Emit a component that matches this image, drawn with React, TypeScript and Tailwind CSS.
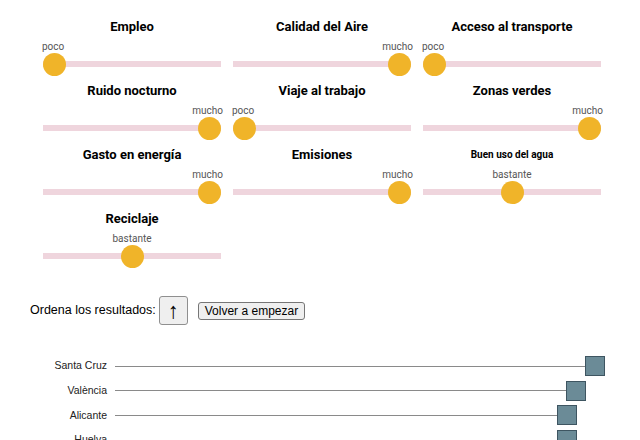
import React from "react";

type Level = "poco" | "bastante" | "mucho";

type Criterio = {
  titulo: string;
  nivel: Level;
  small?: boolean;
};

const criterios: Criterio[] = [
  { titulo: "Empleo", nivel: "poco" },
  { titulo: "Calidad del Aire", nivel: "mucho" },
  { titulo: "Acceso al transporte", nivel: "poco" },
  { titulo: "Ruido nocturno", nivel: "mucho" },
  { titulo: "Viaje al trabajo", nivel: "poco" },
  { titulo: "Zonas verdes", nivel: "mucho" },
  { titulo: "Gasto en energía", nivel: "mucho" },
  { titulo: "Emisiones", nivel: "mucho" },
  { titulo: "Buen uso del agua", nivel: "bastante", small: true },
  { titulo: "Reciclaje", nivel: "bastante" },
];

const ciudades = [
  { nombre: "Santa Cruz", x: 585 },
  { nombre: "València", x: 566 },
  { nombre: "Alicante", x: 557 },
  { nombre: "Huelva", x: 557 },
];

const Slider = ({ titulo, nivel, small }: Criterio) => {
  const labelPos =
    nivel === "poco" ? "justify-start" : nivel === "mucho" ? "justify-end" : "justify-center";
  return (
    <div className="flex flex-col">
      <div
        className={`h-[19px] flex items-center justify-center font-bold text-black ${
          small ? "text-[10px]" : "text-[13px]"
        }`}
      >
        {titulo}
      </div>
      <div className={`mt-[5px] h-[11px] flex items-center text-[10px] text-[#555] ${labelPos}`}>
        <span className={nivel === "poco" ? "-ml-[1px]" : nivel === "mucho" ? "-mr-[2px]" : ""}>
          {nivel}
        </span>
      </div>
      <div className={`relative h-[24px] flex items-center ${labelPos}`}>
        <div className="absolute left-0 right-0 top-[9px] h-[6px] bg-[#efd5dd]" />
        <div className="relative w-[23px] h-[23px] rounded-full bg-[#f0b429]" />
      </div>
    </div>
  );
};

export default function App() {
  return (
    <div className="w-[640px] h-[440px] overflow-hidden bg-white">
      <div
        className="grid grid-cols-[178px_178px_178px] gap-x-[12px] gap-y-[5px] pl-[43px] pt-[17px]"
        style={{ fontFamily: "Roboto, 'Liberation Sans', sans-serif" }}
      >
        {criterios.map((c) => (
          <Slider key={c.titulo} {...c} />
        ))}
      </div>

      <div
        className="mt-[28px] pl-[30px] flex items-center text-[12.5px] text-black"
        style={{ fontFamily: "'Liberation Sans', Arial, sans-serif" }}
      >
        <span>Ordena los resultados:</span>
        <button className="ml-[3px] w-[29px] h-[29px] flex items-center justify-center border border-[#8f8f8f] rounded-[3px] bg-[#efefef] text-[22px] leading-none">
          ↑
        </button>
        <button className="ml-[10px] h-[18px] px-[6px] flex items-center border border-[#767676] rounded-[3px] bg-[#efefef] text-[12px]">
          Volver a empezar
        </button>
      </div>

      <div
        className="mt-[29px] flex flex-col"
        style={{ fontFamily: "'Liberation Sans', Arial, sans-serif" }}
      >
        {ciudades.map((c) => (
          <div key={c.nombre} className="h-[24.6px] flex items-center">
            <div className="w-[107px] text-right text-[10.5px] text-[#222]">{c.nombre}</div>
            <div className="ml-[8px] flex items-center" style={{ width: c.x - 115 + 20 }}>
              <div className="flex-1 h-px bg-[#8a8a8a]" />
              <div className="w-[20px] h-[20px] bg-[#6b8b97] border border-[#3e5561]" />
            </div>
          </div>
        ))}
      </div>
    </div>
  );
}
